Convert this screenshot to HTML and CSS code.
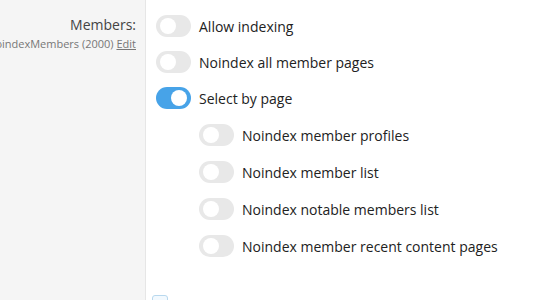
FILE: index.html
```html
<!DOCTYPE html>
<html lang="en">
<head>
    <meta charset="UTF-8">
    <title>Members options</title>
    <link rel="stylesheet" href="styles.css">
</head>
<body>
    <div class="form-row">
        <div class="form-label">
            <div class="label-title">Members:</div>
            <div class="label-hint">noindexMembers (2000) <a href="#">Edit</a></div>
        </div>
        <div class="form-input">
            <div class="toggle-list">
                <label class="toggle-row"><span class="toggle"></span>Allow indexing</label>
                <label class="toggle-row"><span class="toggle"></span>Noindex all member pages</label>
                <label class="toggle-row"><span class="toggle on"></span>Select by page</label>
            </div>
            <div class="toggle-list sub-list">
                <label class="toggle-row"><span class="toggle"></span>Noindex member profiles</label>
                <label class="toggle-row"><span class="toggle"></span>Noindex member list</label>
                <label class="toggle-row"><span class="toggle"></span>Noindex notable members list</label>
                <label class="toggle-row"><span class="toggle"></span>Noindex member recent content pages</label>
            </div>
            <div class="next-row"><span class="check"></span></div>
        </div>
    </div>
</body>
</html>
```

FILE: styles.css
```css
body {
    margin: 0;
    font-family: "Open Sans", "Noto Sans", sans-serif;
    background: white;
    color: #222;
    overflow: hidden;
}
.form-row {
    display: flex;
    height: 300px;
}
.form-label {
    width: 146px;
    flex: none;
    background: #f5f5f5;
    border-right: 1px solid #e6e6e6;
    padding: 15px 9px 0 0;
    box-sizing: border-box;
    white-space: nowrap;
    overflow: hidden;
    display: flex;
    flex-direction: column;
    align-items: flex-end;
}
.label-title {
    font-size: 14px;
    color: #444;
    line-height: 19px;
}
.label-hint {
    font-size: 11px;
    color: #777;
    line-height: 15px;
    margin-top: 2px;
}
.label-hint a {
    color: #777;
    text-decoration: underline;
}
.form-input {
    padding: 15px 0 0 10px;
}
.toggle-list {
    display: flex;
    flex-direction: column;
    gap: 14px;
}
.sub-list {
    margin-top: 15px;
    margin-left: 43px;
    gap: 15px;
}
.toggle-row {
    display: flex;
    align-items: center;
    height: 22px;
    font-size: 14px;
    white-space: nowrap;
}
.toggle {
    position: relative;
    width: 35px;
    height: 22px;
    border-radius: 11px;
    background: #e8e8e8;
    margin-right: 8px;
    flex: none;
}
.toggle::after {
    content: "";
    position: absolute;
    top: 3px;
    left: 4px;
    width: 16px;
    height: 16px;
    border-radius: 50%;
    background: white;
}
.toggle.on {
    background: #47a3e8;
}
.toggle.on::after {
    left: 15px;
}
.next-row {
    margin-top: 38px;
    margin-left: -4px;
}
.check {
    display: block;
    width: 14px;
    height: 14px;
    border: 1px solid #b8d8ee;
    border-radius: 3px;
    background: #f2f9fe;
}
```
